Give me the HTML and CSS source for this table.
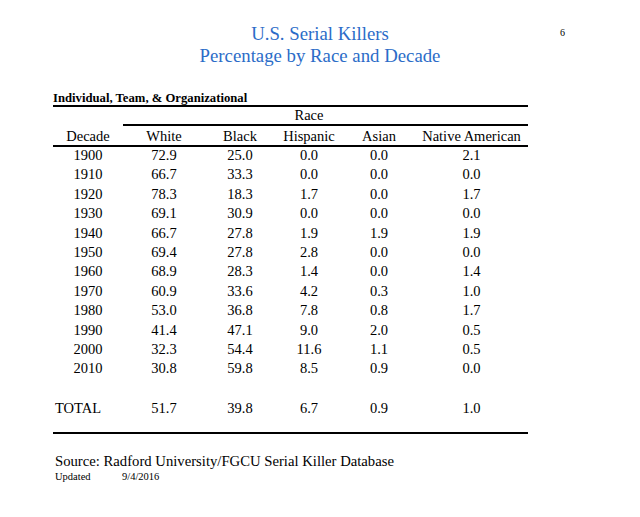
FILE: index.html
```html
<!DOCTYPE html>
<html>
<head>
<meta charset="utf-8">
<link rel="stylesheet" href="styles.css">
</head>
<body>
<div class="page">
  <header class="head">
    <div class="title">
      <div>U.S. Serial Killers</div>
      <div>Percentage by Race and Decade</div>
    </div>
    <div class="pagenum">6</div>
  </header>

  <section class="report">
    <div class="subtitle">Individual, Team, &amp; Organizational</div>
    <table class="data">
      <colgroup>
        <col class="c-decade"><col class="c-white"><col class="c-black"><col class="c-hisp"><col class="c-asian"><col class="c-native">
      </colgroup>
      <thead>
        <tr class="race-row">
          <th></th><th class="rl"></th><th class="rl"></th><th class="rl">Race</th><th class="rl"></th><th class="rl"></th>
        </tr>
        <tr class="col-row">
          <th>Decade</th><th>White</th><th>Black</th><th>Hispanic</th><th>Asian</th><th>Native American</th>
        </tr>
      </thead>
      <tbody>
        <tr><td>1900</td><td>72.9</td><td>25.0</td><td>0.0</td><td>0.0</td><td>2.1</td></tr>
        <tr><td>1910</td><td>66.7</td><td>33.3</td><td>0.0</td><td>0.0</td><td>0.0</td></tr>
        <tr><td>1920</td><td>78.3</td><td>18.3</td><td>1.7</td><td>0.0</td><td>1.7</td></tr>
        <tr><td>1930</td><td>69.1</td><td>30.9</td><td>0.0</td><td>0.0</td><td>0.0</td></tr>
        <tr><td>1940</td><td>66.7</td><td>27.8</td><td>1.9</td><td>1.9</td><td>1.9</td></tr>
        <tr><td>1950</td><td>69.4</td><td>27.8</td><td>2.8</td><td>0.0</td><td>0.0</td></tr>
        <tr><td>1960</td><td>68.9</td><td>28.3</td><td>1.4</td><td>0.0</td><td>1.4</td></tr>
        <tr><td>1970</td><td>60.9</td><td>33.6</td><td>4.2</td><td>0.3</td><td>1.0</td></tr>
        <tr><td>1980</td><td>53.0</td><td>36.8</td><td>7.8</td><td>0.8</td><td>1.7</td></tr>
        <tr><td>1990</td><td>41.4</td><td>47.1</td><td>9.0</td><td>2.0</td><td>0.5</td></tr>
        <tr><td>2000</td><td>32.3</td><td>54.4</td><td>11.6</td><td>1.1</td><td>0.5</td></tr>
        <tr><td>2010</td><td>30.8</td><td>59.8</td><td>8.5</td><td>0.9</td><td>0.0</td></tr>
      </tbody>
      <tfoot>
        <tr class="total"><td class="total-label">TOTAL</td><td>51.7</td><td>39.8</td><td>6.7</td><td>0.9</td><td>1.0</td></tr>
      </tfoot>
    </table>
    <p class="source">Source: Radford University/FGCU Serial Killer Database</p>
    <p class="updated"><span class="upd-label">Updated</span><span>9/4/2016</span></p>
  </section>
</div>
</body>
</html>
```

FILE: styles.css
```css
* { box-sizing: border-box; }
html, body { margin: 0; padding: 0; background: #fff; }
body {
  font-family: "Liberation Serif", "Times New Roman", serif;
  color: #000;
}
.page {
  width: 640px;
  height: 517px;
  overflow: hidden;
}
.head {
  display: grid;
  grid-template-columns: 1fr auto 1fr;
  padding-top: 23px;
}
.title {
  grid-column: 2;
  text-align: center;
  color: #2b6cc8;
  font-size: 18.8px;
  line-height: 22px;
}
.pagenum {
  grid-column: 3;
  justify-self: end;
  padding-right: 75px;
  margin-top: 4px;
  font-size: 10px;
  line-height: 12px;
}
.report {
  margin-left: 53px;
  width: 475px;
  margin-top: 24px;
}
.subtitle {
  font-weight: bold;
  font-size: 12.7px;
  line-height: 14px;
  border-bottom: 2px solid #000;
}
.data {
  width: 475px;
  table-layout: fixed;
  border-collapse: collapse;
  font-size: 14.5px;
}
.c-decade { width: 70px; }
.c-white { width: 82px; }
.c-black { width: 70px; }
.c-hisp { width: 68px; }
.c-asian { width: 72px; }
.c-native { width: 113px; }
.data th, .data td {
  padding: 0;
  text-align: center;
  font-weight: normal;
  white-space: nowrap;
}
.race-row th {
  height: 17px;
  line-height: 17px;
}
.race-row th.rl { border-bottom: 2px solid #000; }
.col-row th {
  height: 18px;
  line-height: 18px;
  padding-top: 1px;
  border-bottom: 2px solid #000;
}
.data tbody td {
  line-height: 16px;
  padding-top: 0;
  padding-bottom: 3.4px;
}
.total td {
  line-height: 16px;
  padding-top: 20px;
  padding-bottom: 16px;
  border-bottom: 2px solid #000;
}
.total td.total-label {
  text-align: left;
  padding-left: 2px;
}
.source {
  margin: 19px 0 0 2px;
  font-size: 14.7px;
  line-height: 17px;
}
.updated {
  margin: 0 0 0 2px;
  font-size: 10.5px;
  line-height: 13px;
  display: flex;
}
.upd-label { width: 67px; }
```
